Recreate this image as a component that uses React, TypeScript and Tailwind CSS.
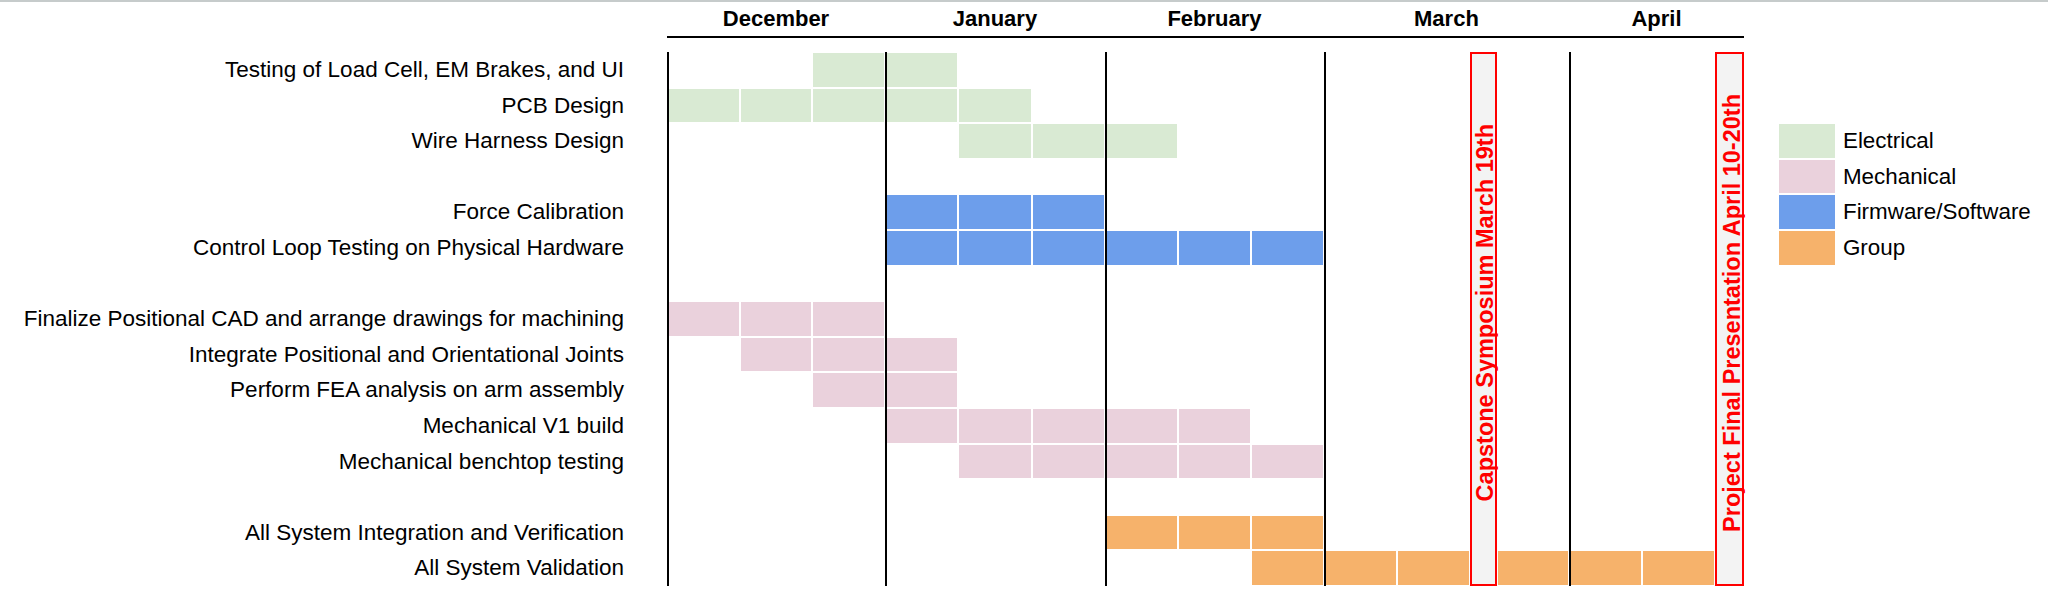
import React from "react";

type Kind = "elec" | "mech" | "fw" | "group";

interface Task {
  label: string;
  kind: Kind;
  start: number;
  end: number;
}

const fill: Record<Kind, string> = {
  elec: "bg-[#d9ead3]",
  mech: "bg-[#ead1dc]",
  fw: "bg-[#6d9eeb]",
  group: "bg-[#f6b26b]",
};

const months = [
  { name: "December", span: "col-span-3" },
  { name: "January", span: "col-span-3" },
  { name: "February", span: "col-span-3" },
  { name: "March", span: "col-span-4" },
  { name: "April", span: "col-span-3" },
];

// 14 week columns; the two milestone columns sit between them
const WEEKS = 14;
const monthStarts = [0, 3, 6, 9, 12];

const rows: (Task | null)[] = [
  { label: "Testing of Load Cell, EM Brakes, and UI", kind: "elec", start: 2, end: 3 },
  { label: "PCB Design", kind: "elec", start: 0, end: 4 },
  { label: "Wire Harness Design", kind: "elec", start: 4, end: 6 },
  null,
  { label: "Force Calibration", kind: "fw", start: 3, end: 5 },
  { label: "Control Loop Testing on Physical Hardware", kind: "fw", start: 3, end: 8 },
  null,
  { label: "Finalize Positional CAD and arrange drawings for machining", kind: "mech", start: 0, end: 2 },
  { label: "Integrate Positional and Orientational Joints", kind: "mech", start: 1, end: 3 },
  { label: "Perform FEA analysis on arm assembly", kind: "mech", start: 2, end: 3 },
  { label: "Mechanical V1 build", kind: "mech", start: 3, end: 7 },
  { label: "Mechanical benchtop testing", kind: "mech", start: 4, end: 8 },
  null,
  { label: "All System Integration and Verification", kind: "group", start: 6, end: 8 },
  { label: "All System Validation", kind: "group", start: 8, end: 13 },
];

const legend: { label: string; kind: Kind }[] = [
  { label: "Electrical", kind: "elec" },
  { label: "Mechanical", kind: "mech" },
  { label: "Firmware/Software", kind: "fw" },
  { label: "Group", kind: "group" },
];

function WeekCell({ task, week }: { task: Task | null; week: number }) {
  const monthStart = monthStarts.includes(week);
  const on = task && week >= task.start && week <= task.end;
  return (
    <div className={`h-full ${monthStart ? "border-l-2 border-black" : ""}`}>
      {on && (
        <div
          className={`h-full border-y border-r border-white ${monthStart ? "" : "border-l"} ${fill[task.kind]}`}
        />
      )}
    </div>
  );
}

function Milestone({ text, col }: { text: string; col: string }) {
  return (
    <div
      className={`${col} row-start-3 row-span-15 flex justify-end items-center border-2 border-[#ff0000] bg-[#f3f3f3]`}
    >
      <span className="-mr-[3px] mb-[12px] [writing-mode:vertical-rl] rotate-180 whitespace-nowrap text-[23.5px] leading-[23.5px] font-bold text-[#ff0000]">
        {text}
      </span>
    </div>
  );
}

export default function App() {
  return (
    <div className="h-[607px] w-[2048px] bg-white border-t-2 border-[#c6cbcb] font-['Liberation_Sans',Arial,sans-serif] text-black">
      <div className="grid grid-cols-[667px_repeat(3,72.67px)_repeat(3,73.33px)_repeat(3,73px)_73px_73px_27px_72px_73px_73px_29px_34px_58px_1fr] grid-rows-[36px_14px_repeat(15,35.6px)]">
        {/* header */}
        <div />
        {months.map((m) => (
          <div
            key={m.name}
            className={`${m.span} border-b-2 border-black text-center text-[22px] leading-[34px] font-bold`}
          >
            {m.name}
          </div>
        ))}
        <div className="col-span-3" />
        <div className="col-span-full" />

        <Milestone text="Capstone Symposium March 19th" col="col-start-13" />
        <Milestone text="Project Final Presentation April 10-20th" col="col-start-17" />

        {rows.map((task, r) => {
          const key = legend[r - 2];
          return (
            <React.Fragment key={r}>
              <div className="pr-[43px] text-right text-[22.5px] leading-[35.6px] whitespace-nowrap">
                {task ? task.label : ""}
              </div>
              {Array.from({ length: WEEKS }, (_, w) => (
                <WeekCell key={w} task={task} week={w} />
              ))}
              <div />
              <div className="h-full">
                {key && <div className={`h-full border border-white ${fill[key.kind]}`} />}
              </div>
              <div className="pl-[7px] text-[22.4px] leading-[35.6px] whitespace-nowrap">
                {key ? key.label : ""}
              </div>
            </React.Fragment>
          );
        })}
      </div>
    </div>
  );
}
